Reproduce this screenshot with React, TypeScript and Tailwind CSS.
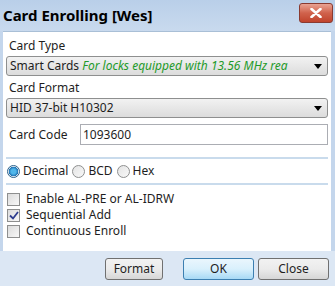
import { useState } from 'react';

const font = { fontFamily: '"Noto Sans", "Open Sans", sans-serif' };

const ComboArrow = () => (
	<svg width="8" height="5" viewBox="0 0 8 5" className="ml-auto shrink-0">
		<path d="M0 0 H8 L4 5 Z" fill="#000" />
	</svg>
);

export default function App() {
	const [mode, setMode] = useState('decimal');
	const [checks, setChecks] = useState({ al: false, seq: true, cont: false });

	return (
		<div
			className="w-[335px] h-[286px] flex flex-col bg-[#c4d6ec] text-[12px] text-[#1e1e1e] overflow-hidden"
			style={font}
		>
			{/* title bar */}
			<div className="h-[31px] flex items-start bg-gradient-to-b from-[#b9cfe9] to-[#c9daee] pl-[3px] pr-[2px]">
				<span className="mt-[4px] text-[15px] font-bold text-black">
					Card Enrolling [Wes]
				</span>
				<button className="ml-auto mt-[3px] w-[34px] h-[20px] rounded-[3px] border border-[#8a3a30] bg-gradient-to-b from-[#e8a293] via-[#d0624c] to-[#c0432c] flex items-center justify-center">
					<svg width="12" height="10" viewBox="0 0 12 10">
						<path d="M1.5 1 L10.5 9 M10.5 1 L1.5 9" stroke="#fff" strokeWidth="2.6" strokeLinecap="round" />
					</svg>
				</button>
			</div>

			<div className="flex-1 flex flex-col mx-[3px] mr-[4px] bg-white border-t border-[#a9bfd6]">
				<div className="flex flex-col px-[3px] pt-[5px]">
					<span className="pl-[3px] h-[19px]">Card Type</span>
					<div className="h-[20px] flex items-center px-[3px] pr-[5px] rounded-[3px] border border-[#8e8f8f] bg-gradient-to-b from-[#f2f2f2] to-[#dcdcdc] whitespace-nowrap overflow-hidden">
						<span>Smart Cards&nbsp;</span>
						<span className="italic text-[#1f9a2a] overflow-hidden text-clip w-[206px]">For locks equipped with 13.56 MHz rea</span>
						<ComboArrow />
					</div>

					<span className="pl-[3px] h-[19px] mt-[2px] pt-[1px]">Card Format</span>
					<div className="h-[20px] mt-[1px] flex items-center px-[3px] pr-[5px] rounded-[3px] border border-[#8e8f8f] bg-gradient-to-b from-[#f2f2f2] to-[#dcdcdc]">
						<span>HID 37-bit H10302</span>
						<ComboArrow />
					</div>

					<div className="flex items-center mt-[6px] h-[21px]">
						<span className="pl-[3px] w-[74px]">Card Code</span>
						<div className="flex-1 h-[21px] border border-[#abadb3] flex items-center px-[2px]">1093600</div>
					</div>

					<div className="mt-[12px] border-t-2 border-[#c9dbec]" />

					<div className="flex items-center gap-[4px] h-[24px] pl-[1px]">
						{[
							['decimal', 'Decimal'],
							['bcd', 'BCD'],
							['hex', 'Hex'],
						].map(([key, label]) => (
							<label key={key} className="flex items-center gap-[3px] cursor-pointer" onClick={() => setMode(key)}>
								<span
									className={
										mode === key
											? 'w-[13px] h-[13px] rounded-full border border-[#2c628b] bg-[radial-gradient(circle,#4fb6ea_30%,#1d6fb0_60%,#e8eef5_65%)]'
											: 'w-[13px] h-[13px] rounded-full border border-[#8e8f8f] bg-gradient-to-br from-[#e4e4e4] to-[#f8f8f8]'
									}
								/>
								<span>{label}</span>
							</label>
						))}
					</div>

					<div className="border-t-2 border-[#c9dbec]" />

					<div className="flex flex-col pt-[6px] pl-[1px]">
						{[
							['al', 'Enable AL-PRE or AL-IDRW'],
							['seq', 'Sequential Add'],
							['cont', 'Continuous Enroll'],
						].map(([key, label]) => {
							const on = checks[key as keyof typeof checks];
							return (
								<label
									key={key}
									className="flex items-center gap-[6px] h-[16px] cursor-pointer"
									onClick={() => setChecks({ ...checks, [key]: !on })}
								>
									<span className="w-[13px] h-[13px] border border-[#8e8f8f] bg-gradient-to-br from-[#dcdcdc] to-[#f8f8f8] flex items-center justify-center">
										{on && (
											<svg width="10" height="9" viewBox="0 0 10 9">
												<path d="M1 4.5 L4 7.5 L9 1" stroke="#2e3d8f" strokeWidth="1.8" fill="none" />
											</svg>
										)}
									</span>
									<span>{label}</span>
								</label>
							);
						})}
					</div>
				</div>
			</div>

			{/* footer */}
			<div className="h-[35px] bg-[#dce7f4] flex items-center justify-end gap-[4px] pr-[6px] pl-[3px]">
				<button className="w-[58px] h-[22px] rounded-[3px] border border-[#707070] bg-gradient-to-b from-[#f2f2f2] via-[#ebebeb] to-[#d6d6d6] mr-[16px]">
					Format
				</button>
				<button className="w-[71px] h-[22px] rounded-[3px] border border-[#3c7fb1] bg-gradient-to-b from-[#eaf6fd] via-[#d9f0fc] to-[#a7d9f5]">
					OK
				</button>
				<button className="w-[71px] h-[22px] rounded-[3px] border border-[#707070] bg-gradient-to-b from-[#f2f2f2] via-[#ebebeb] to-[#d6d6d6]">
					Close
				</button>
			</div>
		</div>
	);
}
